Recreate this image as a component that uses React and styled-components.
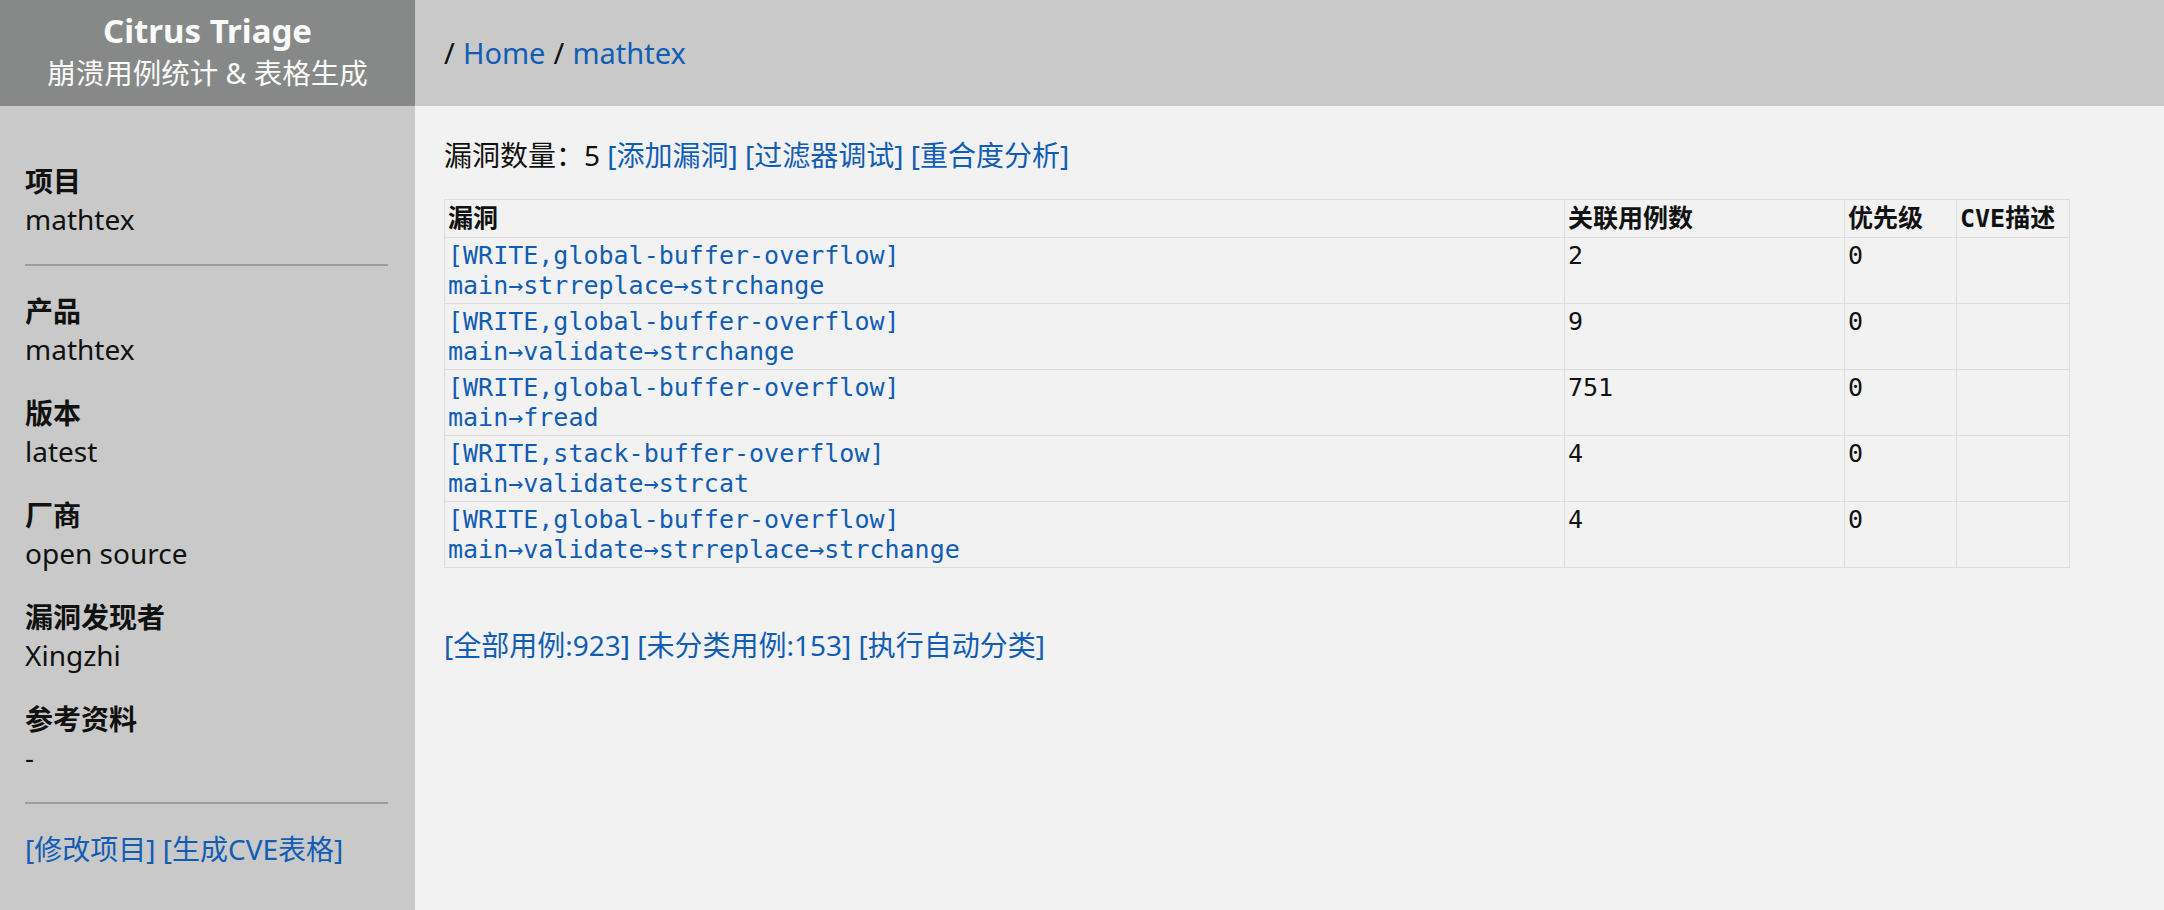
import React from 'react';
import styled, { createGlobalStyle } from 'styled-components';

const GlobalStyle = createGlobalStyle`
  html, body {
    margin: 0;
    padding: 0;
    background: #f1f2f1;
  }
  body {
    font-family: "Noto Sans", "Noto Sans CJK SC", sans-serif;
    font-size: 28px;
    color: #111;
  }
`

const Page = styled.div`
  display: grid;
  grid-template-columns: 415px 1fr;
  grid-template-rows: 106px 1fr;
  min-height: 910px;
`

const Brand = styled.div`
  display: flex;
  flex-direction: column;
  align-items: center;
  justify-content: center;
  background-color: #878988;
  color: #fafafa;
  padding-bottom: 2px;
`

const BrandTitle = styled.div`
  font-size: 33px;
  font-weight: 700;
  line-height: 42px;
`

const BrandSub = styled.div`
  font-size: 28.5px;
  line-height: 42px;
`

const TopBar = styled.div`
  display: flex;
  align-items: center;
  gap: 0.28em;
  background-color: #c8c9c8;
  padding: 0 29px 2px;
  font-size: 29px;
`

const Link = styled.a`
  color: #115db4;
  text-decoration: none;
  cursor: pointer;
`

const Sidebar = styled.aside`
  background-color: #c8c9c8;
  padding: 30px 27px 0 25px;
`

const InfoGroup = styled.div`
  margin: 26px 0;
  line-height: 38px;
`

const InfoLabel = styled.div`
  font-weight: 700;
`

const Rule = styled.hr`
  border: none;
  height: 2px;
  background-color: #9c9d9c;
  margin: 0;
`

const Main = styled.main`
  padding: 30px 29px;
`

const Line = styled.p`
  margin: 0;
  line-height: 38px;
`

const Table = styled.table`
  border-collapse: collapse;
  table-layout: fixed;
  width: 1625px;
  margin: 25px 0 58px;
  font-family: "DejaVu Sans Mono", "Noto Sans CJK SC", monospace;
  font-size: 25px;
  line-height: 30px;
`

const Th = styled.th`
  text-align: left;
  font-weight: 700;
  white-space: nowrap;
  border: 1px solid #dcdddc;
  padding: 4px 3px 3px;
  width: ${p => p.$w};
`

const Td = styled.td`
  border: 1px solid #dcdddc;
  padding: 3px 3px 2px;
  vertical-align: top;
  color: #111;
`

const BugLink = styled(Link)`
  display: block;
  white-space: nowrap;
`

const info = [
  { label: '产品', value: 'mathtex' },
  { label: '版本', value: 'latest' },
  { label: '厂商', value: 'open source' },
  { label: '漏洞发现者', value: 'Xingzhi' },
  { label: '参考资料', value: '-' },
];

const bugs = [
  { kind: '[WRITE,global-buffer-overflow]', stack: 'main→strreplace→strchange', count: 2 },
  { kind: '[WRITE,global-buffer-overflow]', stack: 'main→validate→strchange', count: 9 },
  { kind: '[WRITE,global-buffer-overflow]', stack: 'main→fread', count: 751 },
  { kind: '[WRITE,stack-buffer-overflow]', stack: 'main→validate→strcat', count: 4 },
  { kind: '[WRITE,global-buffer-overflow]', stack: 'main→validate→strreplace→strchange', count: 4 },
];

const App = () => {
  return (
    <Page>
      <GlobalStyle />
      <Brand>
        <BrandTitle>Citrus Triage</BrandTitle>
        <BrandSub>崩溃用例统计 &amp; 表格生成</BrandSub>
      </Brand>
      <TopBar>
        <span>/</span>
        <Link>Home</Link>
        <span>/</span>
        <Link>mathtex</Link>
      </TopBar>
      <Sidebar>
        <InfoGroup>
          <InfoLabel>项目</InfoLabel>
          <div>mathtex</div>
        </InfoGroup>
        <Rule />
        {info.map(item => (
          <InfoGroup key={item.label}>
            <InfoLabel>{item.label}</InfoLabel>
            <div>{item.value}</div>
          </InfoGroup>
        ))}
        <Rule />
        <InfoGroup>
          <Link>[修改项目]</Link> <Link>[生成CVE表格]</Link>
        </InfoGroup>
      </Sidebar>
      <Main>
        <Line>
          漏洞数量：5 <Link>[添加漏洞]</Link> <Link>[过滤器调试]</Link> <Link>[重合度分析]</Link>
        </Line>
        <Table>
          <colgroup>
            <col style={{ width: '1120px' }} />
            <col style={{ width: '280px' }} />
            <col style={{ width: '112px' }} />
            <col style={{ width: '113px' }} />
          </colgroup>
          <thead>
            <tr>
              <Th>漏洞</Th>
              <Th>关联用例数</Th>
              <Th>优先级</Th>
              <Th>CVE描述</Th>
            </tr>
          </thead>
          <tbody>
            {bugs.map((bug, i) => (
              <tr key={i}>
                <Td>
                  <BugLink>{bug.kind}</BugLink>
                  <BugLink>{bug.stack}</BugLink>
                </Td>
                <Td>{bug.count}</Td>
                <Td>0</Td>
                <Td />
              </tr>
            ))}
          </tbody>
        </Table>
        <Line>
          <Link>[全部用例:923]</Link> <Link>[未分类用例:153]</Link> <Link>[执行自动分类]</Link>
        </Line>
      </Main>
    </Page>
  );
}

export default App;
